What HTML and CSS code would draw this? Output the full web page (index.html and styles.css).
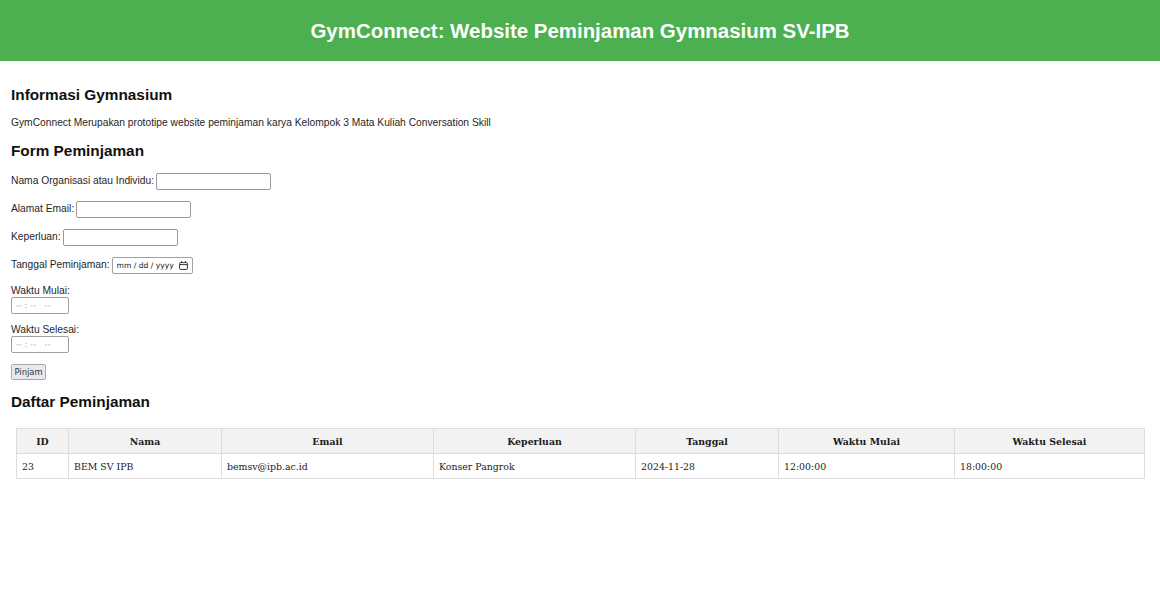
FILE: index.html
```html
<!DOCTYPE html>
<html lang="id">
<head>
<meta charset="utf-8">
<title>GymConnect</title>
<link rel="stylesheet" href="styles.css">
</head>
<body>
<header class="topbar">
  <h1 class="topbar-title">GymConnect: Website Peminjaman Gymnasium SV-IPB</h1>
</header>
<main class="content">
  <h2 class="section-title first">Informasi Gymnasium</h2>
  <p class="info">GymConnect Merupakan prototipe website peminjaman karya Kelompok 3 Mata Kuliah Conversation Skill</p>

  <h2 class="section-title">Form Peminjaman</h2>
  <form class="loan-form">
    <div class="row"><label class="lbl" for="nama">Nama Organisasi atau Individu:</label><input class="txt" id="nama" type="text"></div>
    <div class="row"><label class="lbl" for="email">Alamat Email:</label><input class="txt" id="email" type="email"></div>
    <div class="row"><label class="lbl" for="keperluan">Keperluan:</label><input class="txt" id="keperluan" type="text"></div>
    <div class="row"><label class="lbl" for="tanggal">Tanggal Peminjaman:</label>
      <span class="box date">
        <input class="inner" id="tanggal" type="text" placeholder="mm / dd / yyyy">
        <svg class="cal" width="9" height="9" viewBox="0 0 9 9" aria-hidden="true"><rect x="0.6" y="1.6" width="7.8" height="6.8" rx="0.8" fill="none" stroke="#333" stroke-width="1"/><line x1="0.6" y1="3.6" x2="8.4" y2="3.6" stroke="#333" stroke-width="1"/><line x1="2.5" y1="0.2" x2="2.5" y2="2" stroke="#333" stroke-width="1"/><line x1="6.5" y1="0.2" x2="6.5" y2="2" stroke="#333" stroke-width="1"/></svg>
      </span>
    </div>
    <div class="stack first-stack"><label class="lbl" for="mulai">Waktu Mulai:</label><span class="box time"><input class="inner" id="mulai" type="text" placeholder="-- : --   --"></span></div>
    <div class="stack"><label class="lbl" for="selesai">Waktu Selesai:</label><span class="box time"><input class="inner" id="selesai" type="text" placeholder="-- : --   --"></span></div>
    <button class="btn" type="button">Pinjam</button>
  </form>

  <h2 class="section-title list-title">Daftar Peminjaman</h2>
  <table class="loans">
    <colgroup>
      <col class="c-id"><col class="c-nama"><col class="c-email"><col class="c-kep"><col class="c-tgl"><col class="c-mulai"><col class="c-selesai">
    </colgroup>
    <thead>
      <tr><th>ID</th><th>Nama</th><th>Email</th><th>Keperluan</th><th>Tanggal</th><th>Waktu Mulai</th><th>Waktu Selesai</th></tr>
    </thead>
    <tbody>
      <tr><td>23</td><td>BEM SV IPB</td><td>bemsv@ipb.ac.id</td><td>Konser Pangrok</td><td>2024-11-28</td><td>12:00:00</td><td>18:00:00</td></tr>
    </tbody>
  </table>
</main>
</body>
</html>
```

FILE: styles.css
```css
html, body {
  margin: 0;
  padding: 0;
  background: #fff;
}
body {
  font-family: "Liberation Sans", Arial, sans-serif;
  color: #1f1f1f;
  font-size: 10.25px;
}
.topbar {
  height: 61px;
  background: #4caf50;
  display: flex;
  align-items: center;
  justify-content: center;
}
.topbar-title {
  margin: 0;
  color: #fff;
  font-size: 20.45px;
  font-weight: bold;
  line-height: 24px;
}
.content {
  padding: 0 16px 0 11px;
}
.section-title {
  margin: 13px 0 0;
  font-size: 15.35px;
  line-height: 18px;
  font-weight: bold;
  color: #111;
}
.section-title.first {
  margin-top: 25px;
}
.info {
  margin: 13px 0 0;
  line-height: 12px;
}
.loan-form {
  margin-top: 12px;
  display: flex;
  flex-direction: column;
  align-items: flex-start;
}
.row {
  height: 18px;
  display: flex;
  align-items: center;
  margin-bottom: 10px;
}
.row .lbl {
  margin-right: 2px;
}
.lbl {
  line-height: 12px;
}
.txt {
  box-sizing: border-box;
  width: 115px;
  height: 17px;
  border: 1px solid #9a9a9a;
  border-radius: 2px;
  padding: 1px 2px;
  font-size: 8.7px;
  background: #fff;
}
.box {
  box-sizing: border-box;
  display: inline-flex;
  align-items: center;
  height: 17px;
  border: 1px solid #a0a0a0;
  border-radius: 2px;
  background: #fff;
  padding: 0 4px;
  gap: 3px;
}
.inner {
  border: 0;
  outline: 0;
  padding: 0;
  margin: 0;
  background: transparent;
  font-family: "DejaVu Sans", sans-serif;
  font-size: 7.6px;
  min-width: 0;
  flex: 1;
}
.date {
  width: 81px;
}
.date .inner::placeholder {
  color: #222;
}
.cal {
  flex: none;
}
.time {
  width: 58px;
}
.time .inner::placeholder {
  color: #9a9a9a;
  letter-spacing: 0.3px;
}
.stack {
  display: flex;
  flex-direction: column;
  align-items: flex-start;
  margin-bottom: 10px;
}
.first-stack {
  margin-top: 1px;
}
.stack .lbl {
  margin-bottom: 0;
}
.btn {
  margin-top: 1px;
  box-sizing: border-box;
  height: 16px;
  width: 35px;
  padding: 0;
  font-size: 8.4px;
  font-family: "DejaVu Sans", sans-serif;
  color: #333;
  background: #e9e9ed;
  border: 1px solid #a8a8b0;
  border-radius: 2px;
}
.list-title {
  margin-top: 13px;
}
.loans {
  margin: 17px 0 0 5px;
  width: 1128px;
  border-collapse: collapse;
  table-layout: fixed;
  font-family: "DejaVu Serif", "Liberation Serif", serif;
  font-size: 9.4px;
  color: #1a1a1a;
}
.c-id { width: 52px; }
.c-nama { width: 153px; }
.c-email { width: 212px; }
.c-kep { width: 202px; }
.c-tgl { width: 143px; }
.c-mulai { width: 176px; }
.c-selesai { width: 190px; }
.loans th,
.loans td {
  border: 1px solid #ddd;
  padding: 0 5px;
  height: 24px;
  text-align: left;
}
.loans th {
  background: #f2f2f2;
  text-align: center;
  font-weight: bold;
}
```
